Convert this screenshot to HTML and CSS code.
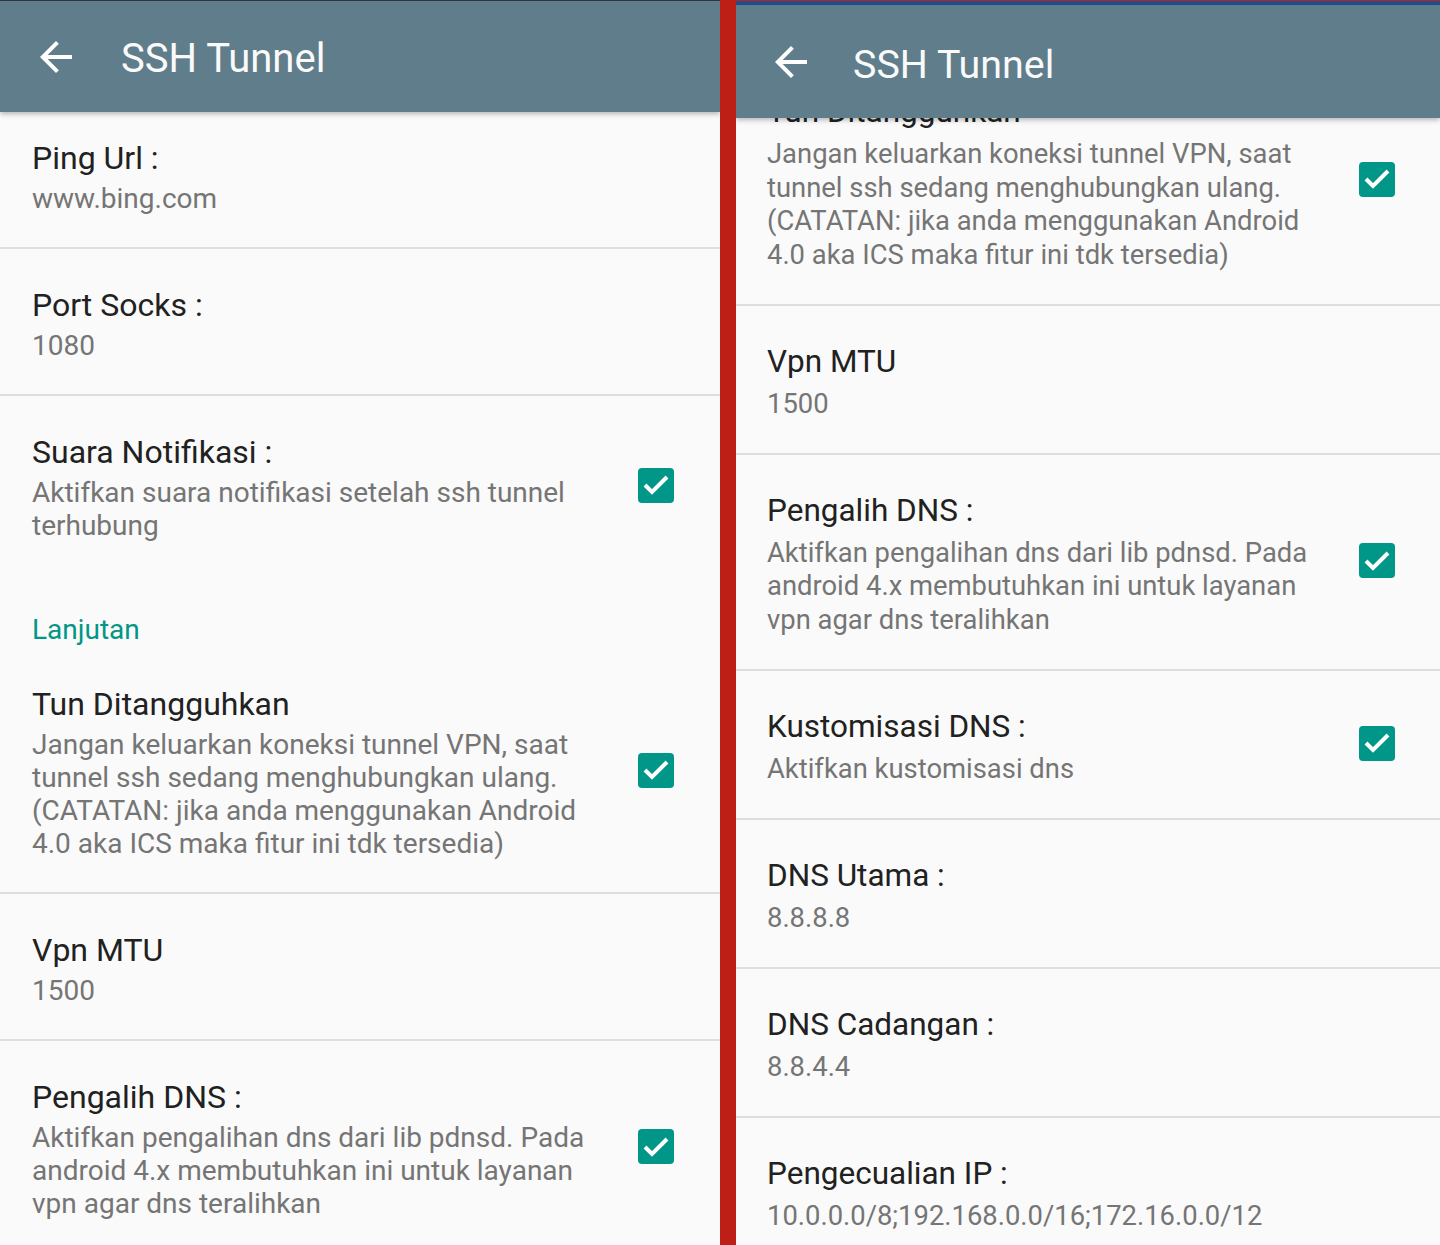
FILE: index.html
```html
<!DOCTYPE html>
<html lang="id">
<head>
<meta charset="utf-8">
<title>SSH Tunnel</title>
<link rel="stylesheet" href="styles.css">
</head>
<body>
<div class="screen">
  <section class="panel panel-left">
    <div class="status-line"></div>
    <header class="toolbar">
      <svg class="back" viewBox="0 0 24 24" width="48" height="48"><path d="M20 11H7.83l5.59-5.59L12 4l-8 8 8 8 1.41-1.41L7.83 13H20v-2z" fill="#fff"/></svg>
      <h1 class="toolbar-title">SSH Tunnel</h1>
    </header>
    <div class="list">
      <div class="pref">
        <div class="pref-text">
          <div class="pref-title">Ping Url :</div>
          <div class="pref-summary">www.bing.com</div>
        </div>
      </div>
      <div class="pref">
        <div class="pref-text">
          <div class="pref-title">Port Socks :</div>
          <div class="pref-summary">1080</div>
        </div>
      </div>
      <div class="pref no-divider">
        <div class="pref-text">
          <div class="pref-title">Suara Notifikasi :</div>
          <div class="pref-summary">Aktifkan suara notifikasi setelah ssh tunnel terhubung</div>
        </div>
        <span class="check"><svg viewBox="0 0 36 36" width="36" height="36"><polyline points="7,18 14,25 29,10" fill="none" stroke="#fff" stroke-width="4"/></svg></span>
      </div>
      <div class="category">Lanjutan</div>
      <div class="pref">
        <div class="pref-text">
          <div class="pref-title">Tun Ditangguhkan</div>
          <div class="pref-summary">Jangan keluarkan koneksi tunnel VPN, saat tunnel ssh sedang menghubungkan ulang. (CATATAN: jika anda menggunakan Android 4.0 aka ICS maka fitur ini tdk tersedia)</div>
        </div>
        <span class="check"><svg viewBox="0 0 36 36" width="36" height="36"><polyline points="7,18 14,25 29,10" fill="none" stroke="#fff" stroke-width="4"/></svg></span>
      </div>
      <div class="pref">
        <div class="pref-text">
          <div class="pref-title">Vpn MTU</div>
          <div class="pref-summary">1500</div>
        </div>
      </div>
      <div class="pref">
        <div class="pref-text">
          <div class="pref-title">Pengalih DNS :</div>
          <div class="pref-summary">Aktifkan pengalihan dns dari lib pdnsd. Pada android 4.x membutuhkan ini untuk layanan vpn agar dns teralihkan</div>
        </div>
        <span class="check"><svg viewBox="0 0 36 36" width="36" height="36"><polyline points="7,18 14,25 29,10" fill="none" stroke="#fff" stroke-width="4"/></svg></span>
      </div>
    </div>
  </section>

  <div class="separator"></div>

  <section class="panel panel-right">
    <div class="status-strip"></div>
    <header class="toolbar">
      <svg class="back" viewBox="0 0 24 24" width="48" height="48"><path d="M20 11H7.83l5.59-5.59L12 4l-8 8 8 8 1.41-1.41L7.83 13H20v-2z" fill="#fff"/></svg>
      <h1 class="toolbar-title">SSH Tunnel</h1>
    </header>
    <div class="list">
      <div class="pref">
        <div class="pref-text">
          <div class="pref-title">Tun Ditangguhkan</div>
          <div class="pref-summary">Jangan keluarkan koneksi tunnel VPN, saat tunnel ssh sedang menghubungkan ulang. (CATATAN: jika anda menggunakan Android 4.0 aka ICS maka fitur ini tdk tersedia)</div>
        </div>
        <span class="check"><svg viewBox="0 0 36 36" width="36" height="36"><polyline points="7,18 14,25 29,10" fill="none" stroke="#fff" stroke-width="4"/></svg></span>
      </div>
      <div class="pref">
        <div class="pref-text">
          <div class="pref-title">Vpn MTU</div>
          <div class="pref-summary">1500</div>
        </div>
      </div>
      <div class="pref">
        <div class="pref-text">
          <div class="pref-title">Pengalih DNS :</div>
          <div class="pref-summary">Aktifkan pengalihan dns dari lib pdnsd. Pada android 4.x membutuhkan ini untuk layanan vpn agar dns teralihkan</div>
        </div>
        <span class="check"><svg viewBox="0 0 36 36" width="36" height="36"><polyline points="7,18 14,25 29,10" fill="none" stroke="#fff" stroke-width="4"/></svg></span>
      </div>
      <div class="pref">
        <div class="pref-text">
          <div class="pref-title">Kustomisasi DNS :</div>
          <div class="pref-summary">Aktifkan kustomisasi dns</div>
        </div>
        <span class="check"><svg viewBox="0 0 36 36" width="36" height="36"><polyline points="7,18 14,25 29,10" fill="none" stroke="#fff" stroke-width="4"/></svg></span>
      </div>
      <div class="pref">
        <div class="pref-text">
          <div class="pref-title">DNS Utama :</div>
          <div class="pref-summary">8.8.8.8</div>
        </div>
      </div>
      <div class="pref">
        <div class="pref-text">
          <div class="pref-title">DNS Cadangan :</div>
          <div class="pref-summary">8.8.4.4</div>
        </div>
      </div>
      <div class="pref">
        <div class="pref-text">
          <div class="pref-title">Pengecualian IP :</div>
          <div class="pref-summary">10.0.0.0/8;192.168.0.0/16;172.16.0.0/12</div>
        </div>
      </div>
    </div>
  </section>
</div>
</body>
</html>
```

FILE: styles.css
```css
* { box-sizing: border-box; }

html, body {
  margin: 0;
  padding: 0;
  background: #fafafa;
}

body {
  font-family: Roboto, "Noto Sans", "Liberation Sans", sans-serif;
  width: 1440px;
  height: 1245px;
  overflow: hidden;
}

.screen {
  display: flex;
  height: 1245px;
}

.panel {
  display: flex;
  flex-direction: column;
  background: #fafafa;
  overflow: hidden;
  height: 100%;
}

.panel-left { width: 720px; }
.panel-right { flex: 1; }

.separator {
  width: 16px;
  background: #bd1f17;
  flex: none;
}

.status-line {
  height: 1px;
  background: #2f3a40;
  flex: none;
}

.status-strip {
  height: 5px;
  border-top: 1px solid #c0201a;
  background: #1f4f8f;
  flex: none;
}

.toolbar {
  position: relative;
  z-index: 2;
  flex: none;
  display: flex;
  align-items: center;
  background: #607d8b;
  box-shadow: 0 2px 5px rgba(0, 0, 0, 0.28);
}

.panel-left .toolbar { height: 111px; padding-left: 32px; }
.panel-right .toolbar { height: 113px; padding-left: 31px; }

.back { flex: none; }

.toolbar-title {
  margin: 0 0 0 41px;
  font-size: 40px;
  font-weight: 400;
  color: #fafafa;
  line-height: 48px;
  padding-top: 4px;
}

.panel-right .toolbar-title {
  margin-left: 38px;
  padding-top: 6px;
  font-size: 39.4px;
}

.list {
  position: relative;
  z-index: 1;
  flex: none;
}

.panel-left .list { margin-top: -10px; }
.panel-right .list { margin-top: -62px; }

.pref {
  display: flex;
  align-items: center;
  padding: 32px 46px 32px 32px;
  border-bottom: 2px solid #dedede;
}

.pref.no-divider { border-bottom: none; }

.panel-right .pref {
  padding: 30px 45px 31.5px 31px;
}

.pref-text {
  flex: 1;
  min-width: 0;
}

.pref-title {
  font-size: 32px;
  line-height: 48px;
  color: #212121;
}

.pref-summary {
  font-size: 28px;
  line-height: 33px;
  color: #757575;
}

.panel-right .pref-title {
  font-size: 31.5px;
  line-height: 52px;
}

.panel-right .pref-summary {
  font-size: 27.4px;
  line-height: 33.5px;
}

.check {
  flex: none;
  width: 36px;
  height: 35px;
  margin-left: 36px;
  border-radius: 4px;
  background: #009688;
  display: flex;
  align-items: center;
  justify-content: center;
}

.check svg { display: block; }

.category {
  padding: 39px 32px 2px;
  font-size: 28px;
  line-height: 33px;
  color: #009688;
}
```
